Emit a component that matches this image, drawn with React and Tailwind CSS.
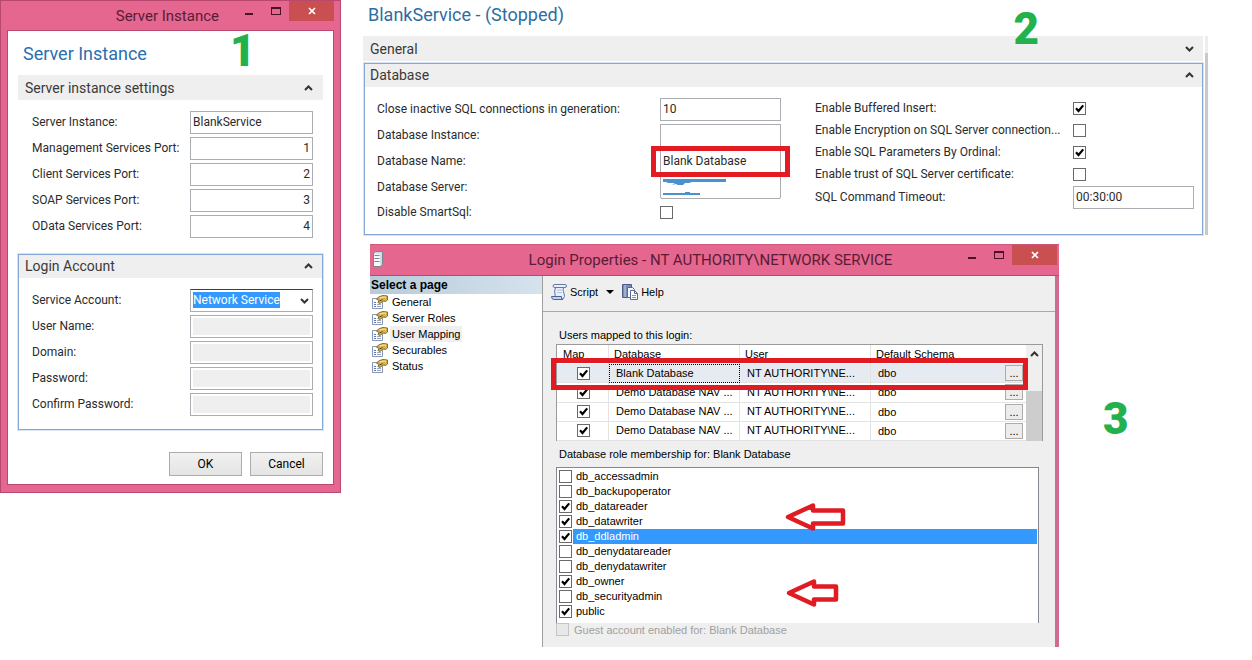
import { useState } from "react";

const segoe = "font-['Roboto','Open_Sans',sans-serif]";
const tahoma = "font-['Liberation_Sans',Arial,sans-serif]";

function Chevron({ up = false, className = "" }) {
  return (
    <svg viewBox="0 0 9 6" className={`w-[9px] h-[6px] text-[#333] ${className}`} fill="none" stroke="currentColor" strokeWidth="2" aria-hidden="true">
      <path d={up ? "M1 5 L4.5 1.5 L8 5" : "M1 1 L4.5 4.5 L8 1"} />
    </svg>
  );
}

function StepNumber({ children, className = "" }) {
  return (
    <span className={`font-['Roboto',sans-serif] font-black text-[44px] leading-8 text-[#22b14c] ${className}`}>
      {children}
    </span>
  );
}

function CheckBox({ id, defaultChecked = false, disabled = false, label }) {
  return (
    <span className="relative block size-[13px] shrink-0">
      <input
        id={id}
        type="checkbox"
        aria-label={label}
        defaultChecked={defaultChecked}
        disabled={disabled}
        className="peer block size-[13px] appearance-none border border-[#6a6a6a] bg-white disabled:border-[#c4c4c4] disabled:bg-[#e8e8e8]"
      />
      <svg viewBox="0 0 13 13" className="pointer-events-none absolute inset-0 hidden size-[13px] text-black peer-checked:block" fill="none" stroke="currentColor" strokeWidth="2.2" aria-hidden="true">
        <path d="M3 6.2 L5.5 9 L10.2 3.4" />
      </svg>
    </span>
  );
}

function WindowButtons() {
  return (
    <div className="flex items-start text-[#4a1226]">
      <button type="button" aria-label="Minimize" className="flex h-5 w-[27px] items-center justify-center pt-1">
        <svg viewBox="0 0 8 8" className="size-2" aria-hidden="true"><path d="M0 4h8v2H0z" fill="currentColor" /></svg>
      </button>
      <button type="button" aria-label="Maximize" className="flex h-5 w-[27px] items-center justify-center">
        <svg viewBox="0 0 10 8" className="h-2 w-[10px]" aria-hidden="true"><path d="M0 0h10v8H0zM1 2v5h8V2z" fill="currentColor" fillRule="evenodd" /></svg>
      </button>
      <button type="button" aria-label="Close" className="flex h-5 w-[45px] items-center justify-center bg-[#c94f50] text-white">
        <svg viewBox="0 0 8 8" className="size-2" fill="none" stroke="currentColor" strokeWidth="1.7" aria-hidden="true"><path d="M1 1l6 6M7 1L1 7" /></svg>
      </button>
    </div>
  );
}

function FieldRow({ id, label, children }) {
  return (
    <div className="flex h-[26px] items-center justify-between">
      <label htmlFor={id} className="whitespace-nowrap">{label}</label>
      {children}
    </div>
  );
}

const box = "h-[23px] border border-[#abadb3] bg-white px-[2px]";

const ports = [
  ["server-instance", "Server Instance:", "BlankService"],
  ["mgmt-port", "Management Services Port:", "1"],
  ["client-port", "Client Services Port:", "2"],
  ["soap-port", "SOAP Services Port:", "3"],
  ["odata-port", "OData Services Port:", "4"],
];

const credentials = [
  ["user-name", "User Name:", "text"],
  ["domain", "Domain:", "text"],
  ["password", "Password:", "password"],
  ["confirm-password", "Confirm Password:", "password"],
];

function ServerInstanceDialog() {
  return (
    <section className={`relative w-[341px] shrink-0 border border-[#b9486f] bg-[#e5668f] px-[6px] pb-[7px] text-xs text-[#2b2b2b] ${segoe}`}>
      <header className="flex h-[29px] items-start">
        <h1 className="flex-1 pt-[5px] pr-4 text-right text-[15px] leading-5 text-[#5a1c34]">Server Instance</h1>
        <WindowButtons />
      </header>
      <div className="border border-[#b9486f] bg-white px-[10px] pt-[11px] pb-2">
        <h2 className="pl-[5px] text-lg leading-6 text-[#2a6fb0]">Server Instance</h2>
        <StepNumber className="absolute top-[34px] left-[229px]">1</StepNumber>
        <div className="mt-[9px] flex h-[25px] items-center justify-between bg-[#efefef] pr-[10px] pl-[7px] text-sm text-[#3a3a3a]">
          Server instance settings
          <Chevron up />
        </div>
        <div className="pt-[9px] pr-[10px] pl-[14px]">
          {ports.map(([id, label, value], i) => (
            <FieldRow key={id} id={id} label={label}>
              <input id={id} defaultValue={value} className={`w-[123px] ${box} ${i > 0 ? "text-right" : ""}`} />
            </FieldRow>
          ))}
        </div>
        <div className="mt-[15px] border border-[#84a9d8] pb-3 ring-1 ring-[#d5e3f5]">
          <div className="flex h-[23px] items-center justify-between bg-[#efefef] pr-[9px] pb-px pl-[6px] text-sm text-[#3a3a3a]">
            Login Account
            <Chevron up />
          </div>
          <div className="pt-[9px] pr-[9px] pl-[13px]">
            <FieldRow id="service-account" label="Service Account:">
              <div className="relative">
                <select id="service-account" className="block h-[23px] w-[123px] appearance-none border border-[#abadb3] border-t-[#3c3c5a] bg-white text-transparent">
                  <option>Network Service</option>
                </select>
                <span className="pointer-events-none absolute top-[3px] left-[3px] bg-[#3399ff] leading-4 text-white" aria-hidden="true">Network Service</span>
                <Chevron className="pointer-events-none absolute top-[9px] right-1" />
              </div>
            </FieldRow>
            {credentials.map(([id, label, type]) => (
              <FieldRow key={id} id={id} label={label}>
                <input id={id} type={type} disabled className="h-[23px] w-[123px] border border-[#abadb3] bg-[#efefef] bg-clip-content p-[2px]" />
              </FieldRow>
            ))}
          </div>
        </div>
        <div className="mt-[22px] flex justify-end gap-2 text-black">
          <button type="button" className="h-6 w-[73px] border border-[#acacac] bg-linear-to-b from-[#f1f1f1] to-[#e4e4e4]">OK</button>
          <button type="button" className="h-6 w-[73px] border border-[#acacac] bg-linear-to-b from-[#f1f1f1] to-[#e4e4e4]">Cancel</button>
        </div>
      </div>
    </section>
  );
}

const flags = [
  ["buffered-insert", "Enable Buffered Insert:", true],
  ["encryption", "Enable Encryption on SQL Server connection...", false],
  ["ordinal", "Enable SQL Parameters By Ordinal:", true],
  ["trust-cert", "Enable trust of SQL Server certificate:", false],
];

function ServicePanel() {
  return (
    <section className={`relative text-xs text-[#2b2b2b] ${segoe}`}>
      <h2 className="pt-[3px] pl-[5px] text-lg leading-6 text-[#2f6d9f]">BlankService - (Stopped)</h2>
      <StepNumber className="absolute top-[13px] right-[169px]">2</StepNumber>
      <div className="mt-[9px] flex gap-[2px]">
        <div className="flex-1">
          <div className="flex h-[25px] items-center justify-between bg-[#efefef] pr-[9px] pl-[7px] text-sm text-[#3a3a3a]">
            General
            <Chevron />
          </div>
          <div className="mt-[2px] ml-px border border-[#84a9d8] pb-[10px] ring-1 ring-[#d5e3f5]">
            <div className="flex h-[23px] items-center justify-between bg-[#efefef] pr-2 pb-px pl-[5px] text-sm text-[#3a3a3a]">
              Database
              <Chevron up />
            </div>
            <div className="grid grid-cols-[404fr_379fr] gap-[34px] pt-[9px] pr-2 pl-3">
              <div>
                <FieldRow id="close-inactive" label="Close inactive SQL connections in generation:">
                  <input id="close-inactive" defaultValue="10" className={`w-[121px] ${box}`} />
                </FieldRow>
                <FieldRow id="db-instance" label="Database Instance:">
                  <input id="db-instance" className={`w-[121px] ${box}`} />
                </FieldRow>
                <FieldRow id="db-name" label="Database Name:">
                  <div className="relative z-10">
                    <input id="db-name" defaultValue="Blank Database" className={`block w-[121px] ${box}`} />
                    <div className="pointer-events-none absolute -inset-x-[9px] -inset-y-[4px] border-5 border-[#e31b23]" />
                  </div>
                </FieldRow>
                <FieldRow id="db-server" label="Database Server:">
                  <div className="relative">
                    <input id="db-server" className={`block w-[121px] rounded-b-xs ${box}`} />
                    <svg viewBox="0 0 66 17" className="pointer-events-none absolute top-[3px] left-[3px] h-[17px] w-[66px]" fill="#4a92cf" aria-hidden="true">
                      <path d="M0 0h63v3H29l-3 1h-4l-2 2h-5l-2-1-4 1 3-2H5L3 3H0zM0 14h22v-1h5v1h10v2H0z" />
                    </svg>
                  </div>
                </FieldRow>
                <div className="flex h-6 items-center justify-between">
                  <label htmlFor="smart-sql">Disable SmartSql:</label>
                  <div className="w-[121px]"><CheckBox id="smart-sql" /></div>
                </div>
              </div>
              <div className="pt-px">
                {flags.map(([id, label, checked]) => (
                  <div key={id} className="flex h-[22px] items-center justify-between">
                    <label htmlFor={id} className="whitespace-nowrap">{label}</label>
                    <div className="w-[121px]"><CheckBox id={id} defaultChecked={checked} /></div>
                  </div>
                ))}
                <div className="flex h-6 items-center justify-between">
                  <label htmlFor="timeout">SQL Command Timeout:</label>
                  <input id="timeout" defaultValue="00:30:00" className={`w-[121px] ${box}`} />
                </div>
              </div>
            </div>
          </div>
        </div>
        <div className="w-[3px] bg-[#c9c9c9]"><div className="h-[17px] bg-[#ededed]" /></div>
      </div>
    </section>
  );
}

function PageIcon() {
  return (
    <svg viewBox="0 0 16 14" className="h-[14px] w-4 shrink-0" aria-hidden="true">
      <path d="M.5 3.5h10v10H.5z" fill="#fbfcfe" stroke="#8d96ac" />
      <path d="M2 7.500h2M2 9.500h2M2 11.500h2" stroke="#5a78b8" />
      <path d="M5 9.500h4M5 11.500h4" stroke="#9aa4bd" />
      <path d="M4.500 4 7.500 1.500 11 .5l4.500.5v4l-2 1.500-2.500-.5-3 2.500-2-1 1-2z" fill="#d9b44a" stroke="#75622a" strokeWidth=".9" />
      <path d="M8 3l3-1 3 .2" stroke="#f7eab4" fill="none" />
      <path d="M7.500 6l3-1.500" stroke="#4f4320" />
    </svg>
  );
}

function ServerIcon() {
  return (
    <svg viewBox="0 0 10 16" className="h-4 w-[10px]" aria-hidden="true">
      <path d="M.5 2.500 2.500.5h7v13l-2 2h-7z" fill="#d4dae2" stroke="#7d8490" />
      <path d="M1 3h6v12H1z" fill="#f7f8fa" />
      <path d="M1.500 4.500h5M1.500 7.500h5M1.500 10.500h5" stroke="#79818e" />
    </svg>
  );
}

function ScriptIcon() {
  return (
    <svg viewBox="0 0 16 16" className="size-4" aria-hidden="true">
      <path d="M4 .5h10q1.500 0 1.500 1.500T14 3.500h-1.500q-1 3 .5 6t-1 5.500H2.500q2.500-2 1.500-5T4.500 4Q2 3.500 2 2T4 .5z" fill="#e9f0fa" stroke="#5f78a5" />
      <path d="M.5 12.500h10q-.5 2.500 1.500 3H2.500Q.5 15 .5 12.500z" fill="#c3d2ec" stroke="#4a6593" />
      <path d="M4 3.500h8.500" stroke="#5f78a5" />
      <path d="M6 6h5M6 8.500h5" stroke="#b3c5e2" />
    </svg>
  );
}

function HelpIcon() {
  return (
    <svg viewBox="0 0 16 16" className="size-4" aria-hidden="true">
      <path d="M.5.5h9v13h-9z" fill="#7c8cb4" stroke="#4d5c85" />
      <path d="M3 1v12" stroke="#c5cee4" />
      <path d="M5.500 3.500h5l2 2v8h-7z" fill="#f3f6fc" stroke="#566a96" />
      <path d="M8.500 6.500h4l3 3v6h-7z" fill="#fff" stroke="#566a96" />
      <path d="M12.500 6.500v3h3" fill="none" stroke="#566a96" />
      <path d="M10 11.500h4M10 13.500h4" stroke="#8195bf" />
    </svg>
  );
}

function RedArrow({ width, className }) {
  const right = width - 3;
  return (
    <svg viewBox={`0 0 ${width} 30`} width={width} height="30" className={`pointer-events-none absolute ${className}`} aria-hidden="true">
      <path d={`M4 15 L29 3.500 V8.500 H${right} V21.500 H29 V26.500 Z`} fill="#fff" stroke="#e01b22" strokeWidth="4.500" strokeLinejoin="round" />
    </svg>
  );
}

const pages = ["General", "Server Roles", "User Mapping", "Securables", "Status"];

const mappings = ["Blank Database", "Demo Database NAV ...", "Demo Database NAV ...", "Demo Database NAV ..."];

const roles = [
  ["db_accessadmin", false],
  ["db_backupoperator", false],
  ["db_datareader", true],
  ["db_datawriter", true],
  ["db_ddladmin", true],
  ["db_denydatareader", false],
  ["db_denydatawriter", false],
  ["db_owner", true],
  ["db_securityadmin", false],
  ["public", true],
];

function MappingTable() {
  return (
    <div className="relative mt-[2px] mr-3">
      <div className="flex h-[97px] overflow-hidden border border-b-0 border-[#9a9a9a] bg-white">
        <table className="flex-1 table-fixed border-separate border-spacing-0 text-left">
          <colgroup>
            <col className="w-[52px]" />
            <col className="w-[131px]" />
            <col className="w-[131px]" />
            <col />
          </colgroup>
          <thead>
            <tr className="h-[19px]">
              <th className="border-r border-[#e3e3e3] p-0 pb-[2px] pl-[6px] font-normal">Map</th>
              <th className="border-r border-[#e3e3e3] p-0 pb-[2px] pl-[5px] font-normal">Database</th>
              <th className="border-r border-[#e3e3e3] p-0 pb-[2px] pl-[5px] font-normal">User</th>
              <th className="p-0 pb-[2px] pl-[5px] font-normal">Default Schema</th>
            </tr>
          </thead>
          <tbody>
            {mappings.map((name, i) => (
              <tr key={i} className={`h-[19px] ${i === 0 ? "bg-[#e6ebf1]" : ""}`}>
                <td className="border-r border-b border-[#e3e3e3] p-0 pl-5"><CheckBox label={`Map ${name}`} defaultChecked /></td>
                <td className={`p-0 pb-px pl-[7px] ${i === 0 ? "outline outline-dotted -outline-offset-1 outline-black" : "border-r border-b border-[#e3e3e3]"}`}>{name}</td>
                <td className="border-r border-b border-[#e3e3e3] p-0 pb-px pl-[7px]">NT AUTHORITY\NE...</td>
                <td className="border-b border-[#e3e3e3] p-0 pl-[7px]">
                  <div className="flex items-center justify-between pr-[3px]">
                    dbo
                    <button type="button" className="h-4 w-[18px] border border-[#acacac] bg-[#ececec] text-[11px] leading-3">...</button>
                  </div>
                </td>
              </tr>
            ))}
          </tbody>
        </table>
        <div className="flex w-4 flex-col items-center bg-[#efefef]">
          <Chevron up className="mt-[6px]" />
          <div className="mt-[34px] w-full flex-1 bg-[#cdcdcd]" />
        </div>
      </div>
      <div className="pointer-events-none absolute top-[14px] right-[15px] -left-[5px] h-8 border-5 border-[#e01b22]" />
    </div>
  );
}

function LoginPropertiesWindow() {
  const [page, setPage] = useState("User Mapping");
  return (
    <section className={`flex-1 border-t border-[#d0567f] bg-[#efefef] text-[11px] leading-[14px] text-black ${tahoma}`}>
      <header className={`flex h-[31px] items-start border-b border-[#b9486f] bg-[#e5668f] pr-[2px] ${segoe}`}>
        <div className="pt-[6px] pl-[3px]"><ServerIcon /></div>
        <h1 className="flex-1 pt-[5px] pl-20 text-center text-[15px] leading-5 text-[#5a1c34]">Login Properties - NT AUTHORITY\NETWORK SERVICE</h1>
        <WindowButtons />
      </header>
      <div className="flex border-r-4 border-[#cf6b90]">
        <nav className="w-[172px] shrink-0 bg-white">
          <h2 className="h-[18px] bg-linear-to-r from-[#b7cbdb] to-[#d5e3ed] pl-px text-xs leading-[18px] font-bold">Select a page</h2>
          {pages.map((name) => (
            <button key={name} type="button" onClick={() => setPage(name)} className="flex h-4 w-full items-center gap-[2px] pl-[2px]">
              <PageIcon />
              <span className={`px-[2px] leading-4 ${page === name ? "bg-[#efefef]" : ""}`}>{name}</span>
            </button>
          ))}
        </nav>
        <div className="flex-1 border-l border-[#9f9f9f]">
          <div className="flex h-9 items-center border-b border-[#a9a9a9] pb-1 pl-2">
            <button type="button" className="flex items-center gap-[3px]"><ScriptIcon />Script</button>
            <button type="button" aria-label="Script options" className="px-2">
              <svg viewBox="0 0 8 4" className="h-1 w-2" aria-hidden="true"><path d="M0 0h8L4 4z" /></svg>
            </button>
            <button type="button" className="flex items-center gap-[3px]"><HelpIcon />Help</button>
          </div>
          <div className="pt-4 pl-[13px]">
            <p className="pl-[3px]">Users mapped to this login:</p>
            <MappingTable />
            <p className="mt-[6px] pl-[3px]">Database role membership for: Blank Database</p>
            <div className="relative mt-[6px] mr-4 border border-b-0 border-[#828790] bg-white px-px pt-px pb-1">
              {roles.map(([name, checked]) => (
                <div key={name} className="flex h-[15px] items-center pl-px">
                  <CheckBox id={name} defaultChecked={checked} />
                  <label htmlFor={name} className={`ml-px flex-1 pl-[3px] leading-[15px] ${name === "db_ddladmin" ? "bg-[#3399ff] text-white" : ""}`}>{name}</label>
                </div>
              ))}
              <RedArrow width={62} className="top-[34px] left-[227px]" />
              <RedArrow width={54} className="top-[110px] left-[228px]" />
            </div>
            <div className="flex h-6 items-start gap-[5px] text-[#a0a0a0]">
              <CheckBox id="guest" disabled />
              <label htmlFor="guest">Guest account enabled for: Blank Database</label>
            </div>
          </div>
        </div>
      </div>
    </section>
  );
}

export default function App() {
  return (
    <main className="flex min-h-screen items-start gap-[22px] bg-white pr-11">
      <ServerInstanceDialog />
      <div className="flex-1">
        <ServicePanel />
        <div className="mt-[9px] flex items-start pl-[7px]">
          <LoginPropertiesWindow />
          <div className="w-[149px] pt-[159px] pl-11"><StepNumber>3</StepNumber></div>
        </div>
      </div>
    </main>
  );
}
